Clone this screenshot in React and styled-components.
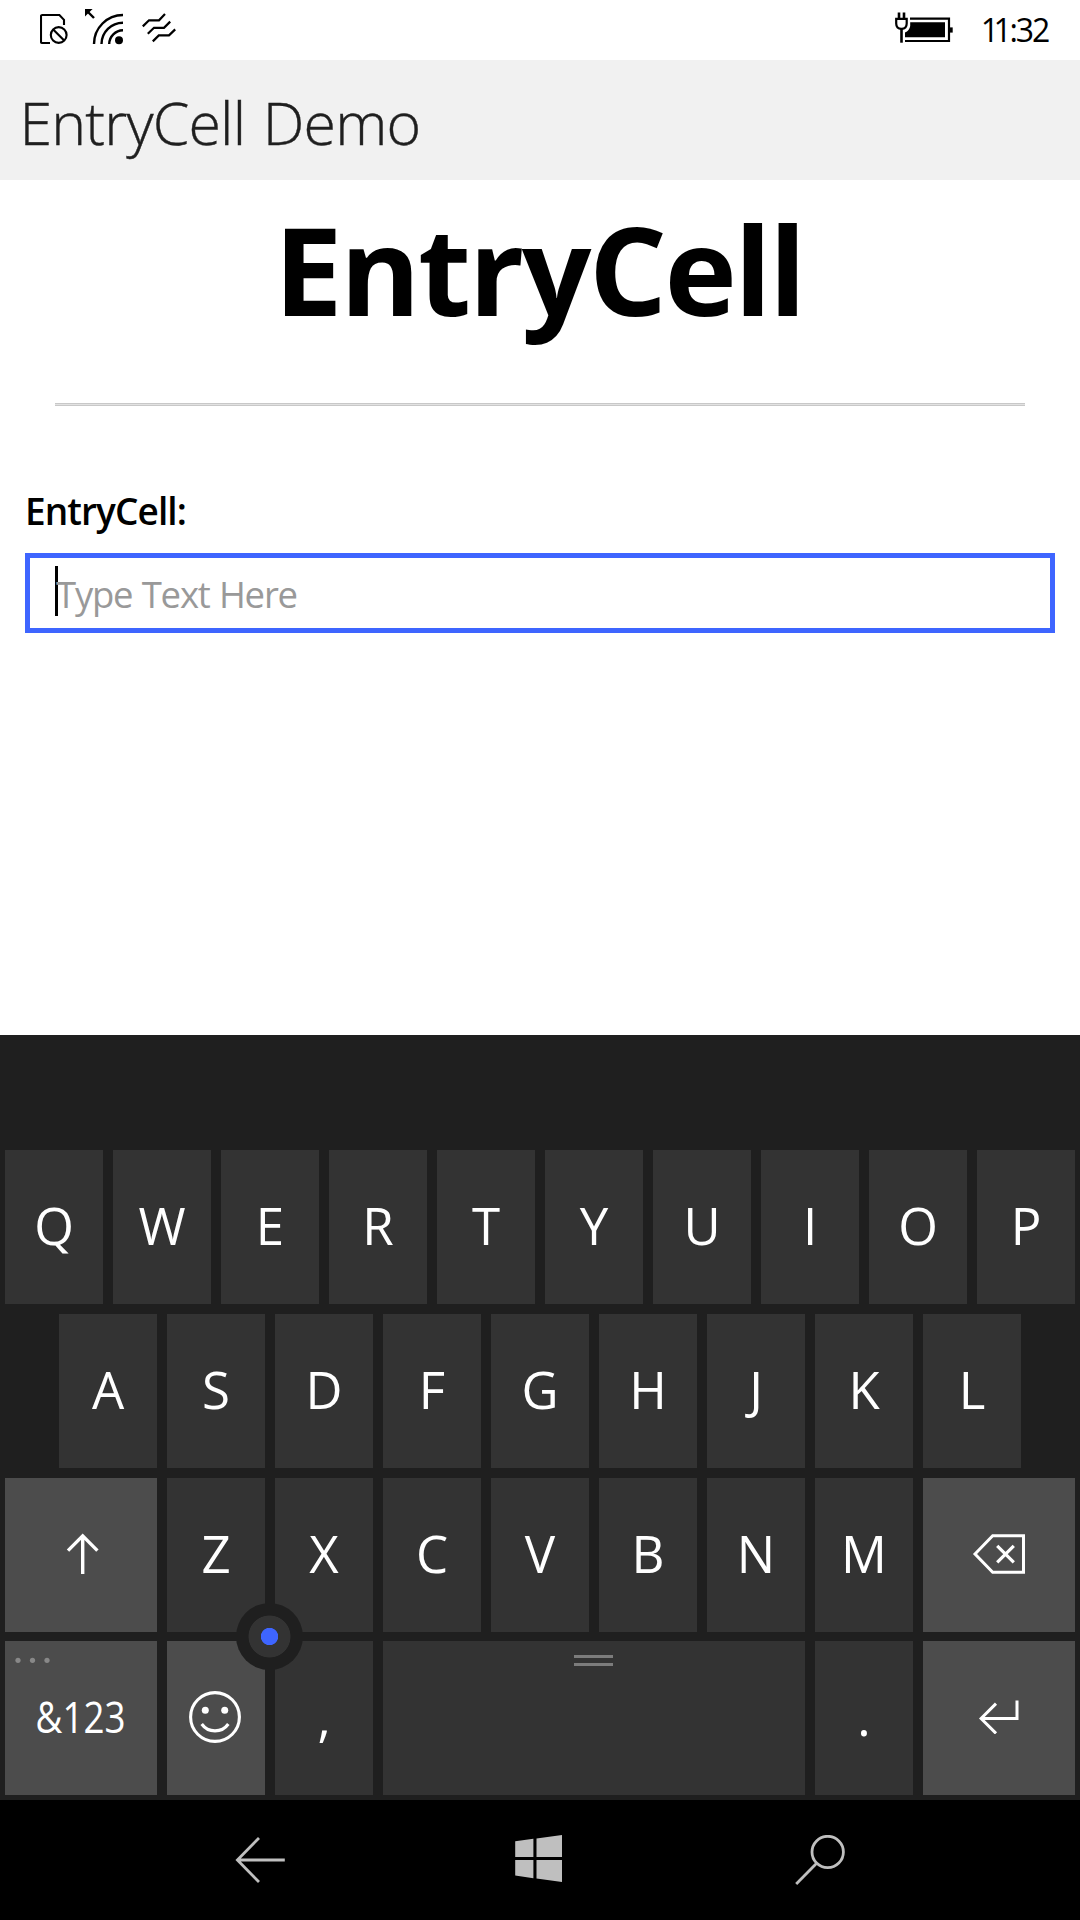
import React from 'react';
import styled, { createGlobalStyle } from 'styled-components';

const GlobalStyle = createGlobalStyle`
  * { box-sizing: border-box; }
  body { margin: 0; background: #fff; }
`;

const Phone = styled.div`
  width: 1080px;
  height: 1920px;
  display: flex;
  flex-direction: column;
  overflow: hidden;
  background: #fff;
  color: #000;
  font-family: 'Open Sans', 'Noto Sans', sans-serif;
  white-space: nowrap;
`;

const Glyph = styled.svg`
  display: block;
  flex: none;
  fill: none;
  stroke: currentColor;
`;

const StatusBar = styled.div`
  height: 60px;
  flex: none;
  display: flex;
  align-items: center;
  padding: 0 31px 0 40px;
`;

const StatusIcons = styled.div`
  display: flex;
  gap: 17px;
  flex: 1;
`;

const Clock = styled.span`
  display: flex;
  justify-content: flex-end;
  width: 69px;
  margin-left: 26px;
  padding-right: 1px;
  font-size: 32px;
  line-height: 44px;
  letter-spacing: -2.2px;
`;

const TightDigit = styled.span`
  letter-spacing: -5.5px;
`;

const TitleBar = styled.header`
  height: 120px;
  flex: none;
  display: flex;
  align-items: center;
  padding: 4px 19.5px 0;
  background: #f1f1f1;
  color: #1f1f1f;
  font-size: 59px;
  font-weight: 300;
  letter-spacing: -0.8px;
  word-spacing: 3px;
  -webkit-text-stroke: 0.4px #1f1f1f;
`;

const Content = styled.main`
  height: 855px;
  flex: none;
  display: flex;
  flex-direction: column;
`;

const Heading = styled.h1`
  margin: 0;
  padding-right: 2px;
  font-size: 122.5px;
  line-height: 178px;
  font-weight: 700;
  letter-spacing: -2.55px;
  text-align: center;
`;

const Rule = styled.div`
  height: 3px;
  margin: 45px 55px 85px;
  background: #e2e2e2;
  border: solid #c8c8c8;
  border-width: 1px 0;
`;

const Field = styled.div`
  display: flex;
  flex-direction: column;
  gap: 22px;
  padding: 0 25px;
`;

const Label = styled.label`
  font-size: 37px;
  line-height: 40px;
  font-weight: 600;
  letter-spacing: -0.92px;
`;

const TextBox = styled.div`
  height: 80px;
  display: flex;
  align-items: center;
  padding-left: 25px;
  border: 5px solid #3e65ff;
`;

const Caret = styled.span`
  width: 3px;
  height: 50px;
  margin-bottom: 4px;
  background: #000;
`;

const Placeholder = styled.span`
  margin-left: -2px;
  padding-top: 2px;
  color: #999;
  font-size: 36.5px;
  letter-spacing: -1.2px;
  word-spacing: 1px;
`;

const Keyboard = styled.section`
  height: 765px;
  flex: none;
  display: flex;
  flex-direction: column;
  gap: 10px;
  padding: 115px 5px 5px;
  background: #1f1f1f;
  color: #fff;
`;

const KeyRow = styled.div`
  position: relative;
  display: flex;
  justify-content: center;
  gap: 10px;
  height: 154px;
  margin-top: ${(p) => (p.$tight ? '-1px' : 0)};
`;

const Key = styled.div`
  position: relative;
  width: ${(p) => p.$w || 98}px;
  flex: none;
  display: flex;
  align-items: center;
  justify-content: center;
  padding-bottom: 4px;
  background: ${(p) => (p.$light ? '#4c4c4c' : '#333')};
  font-size: ${(p) => p.$size || 51}px;
`;

const Symbols = styled.span`
  transform: scaleX(0.855);
`;

const MoreDots = styled(Glyph)`
  position: absolute;
  left: 10px;
  top: 16px;
  fill: #888;
  stroke: none;
`;

const Grip = styled.div`
  position: absolute;
  top: 14px;
  left: 191px;
  width: 39px;
  height: 11px;
  border-top: 3px solid #7c7c7c;
  border-bottom: 3px solid #7c7c7c;
`;

const Nub = styled.div`
  position: absolute;
  left: 231px;
  top: -38px;
  width: 67px;
  height: 67px;
  border-radius: 50%;
  background: radial-gradient(circle, #3e65ff 8.3px, #333 9px, #333 20.6px, #1f1f1f 21.3px);
`;

const NavBar = styled.nav`
  height: 120px;
  flex: none;
  display: flex;
  justify-content: space-between;
  align-items: center;
  padding: 0 235px;
  background: #000;
  color: #bfbfbf;
`;

const SimIcon = () => (
  <Glyph width="28" height="60" viewBox="40 0 28 60" strokeWidth="2.1">
    <path d="M50 43H42.2Q41 43 41 41.8V16.2Q41 15 42.2 15H59.4L64 19.8V25" />
    <circle cx="58.7" cy="35" r="7.9" />
    <path d="M53.2 29.4L64.2 40.6" />
  </Glyph>
);

const WifiIcon = () => (
  <Glyph width="39" height="60" viewBox="85 0 39 60" strokeWidth="2.4">
    <path d="M94 44A29 29 0 0 1 123 15M101.5 44A21.5 21.5 0 0 1 123 22.7M109.2 44A14 14 0 0 1 123 30.2" />
    <circle cx="119" cy="40.3" r="4" fill="currentColor" stroke="none" />
    <path d="M85 9H92.6L85 16.6Z" fill="currentColor" stroke="none" />
    <path d="M86.5 10.5L94 18" />
  </Glyph>
);

const VibrateIcon = () => (
  <Glyph width="35" height="60" viewBox="141 0 35 60" strokeWidth="2.2">
    <path d="M142.8 26.4L149 20.3H159L165 14M147.8 33.8L154 27.8H164L170.2 21.6M152.8 41.4L158.8 35.4H169L175.2 29.4" />
  </Glyph>
);

const BatteryIcon = () => (
  <Glyph width="60" height="60" viewBox="894 0 60 60" strokeWidth="2.2">
    <path d="M899 12.5V18.5M904 12.5V18.5" strokeWidth="2.6" />
    <path d="M896.2 18.8H906.7V23.5Q906.7 28.8 901.5 28.8Q896.2 28.8 896.2 23.5Z" />
    <path d="M901.5 29V42.7" strokeWidth="2.6" />
    <path d="M910 18.6H949V41H905" />
    <path d="M910.2 22.2H945V37.2H905V32.4Q909.4 30.8 910.2 26Z" fill="currentColor" stroke="none" />
    <path d="M950 27.4H952.7V32.6H950Z" fill="currentColor" stroke="none" />
  </Glyph>
);

const ShiftIcon = () => (
  <Glyph width="38" height="42" viewBox="62 1532 38 42" strokeWidth="3.4">
    <path d="M82.7 1574V1536M68 1550.6L82.7 1535.9L97.4 1550.6" />
  </Glyph>
);

const BackspaceIcon = () => (
  <Glyph width="54" height="42" viewBox="972 1532 54 42" strokeWidth="3">
    <path d="M975 1554L992.7 1535.8H1023.5V1572.2H992.7Z" />
    <path d="M997.2 1545.8L1013.8 1562.4M1013.8 1545.8L997.2 1562.4" strokeWidth="3.2" />
  </Glyph>
);

const SmileIcon = () => (
  <Glyph width="54" height="54" viewBox="189 1689 54 54" strokeWidth="3.1">
    <circle cx="215" cy="1717" r="24.4" />
    <path d="M201.7 1724A16.3 16.3 0 0 0 228.3 1724" />
    <circle cx="205.3" cy="1710.3" r="3.5" fill="currentColor" stroke="none" />
    <circle cx="224.7" cy="1710.3" r="3.5" fill="currentColor" stroke="none" />
  </Glyph>
);

const EnterIcon = () => (
  <Glyph width="40" height="36" viewBox="979 1698 40 36" strokeWidth="3">
    <path d="M1017 1700.5V1718.5H981.5M996 1703.6L981.1 1718.5L996 1733.4" />
  </Glyph>
);

const BackIcon = () => (
  <Glyph width="50" height="50" viewBox="235 1835 50 50" strokeWidth="2.8">
    <path d="M284.8 1860H238M259 1838L237.4 1860L259 1882" />
  </Glyph>
);

const WindowsIcon = () => (
  <Glyph width="50" height="50" viewBox="515 1835 50 50">
    <path
      fill="currentColor"
      stroke="none"
      d="M515.2 1841.3L533.4 1838.8V1857H515.2ZM536.5 1838.4L562 1835V1857H536.5ZM515.2 1860H533.4V1878.2L515.2 1875.6ZM536.5 1860H562V1882L536.5 1878.6Z"
    />
  </Glyph>
);

const SearchIcon = () => (
  <Glyph width="50" height="50" viewBox="795 1835 50 50" strokeWidth="2.8">
    <circle cx="827.7" cy="1852" r="15.7" />
    <path d="M816.4 1863.5L796.2 1884" />
  </Glyph>
);

const letters = (s) => s.split('').map((c) => <Key key={c}>{c}</Key>);

export default function App() {
  return (
    <>
      <GlobalStyle />
      <Phone>
        <StatusBar>
          <StatusIcons>
            <SimIcon />
            <WifiIcon />
            <VibrateIcon />
          </StatusIcons>
          <BatteryIcon />
          <Clock>
            <TightDigit>1</TightDigit>1:32
          </Clock>
        </StatusBar>
        <TitleBar>EntryCell Demo</TitleBar>
        <Content>
          <Heading>EntryCell</Heading>
          <Rule />
          <Field>
            <Label>EntryCell:</Label>
            <TextBox>
              <Caret />
              <Placeholder>Type Text Here</Placeholder>
            </TextBox>
          </Field>
        </Content>
        <Keyboard>
          <KeyRow>{letters('QWERTYUIOP')}</KeyRow>
          <KeyRow>{letters('ASDFGHJKL')}</KeyRow>
          <KeyRow>
            <Key $w={152} $light><ShiftIcon /></Key>
            {letters('ZXCVBNM')}
            <Key $w={152} $light><BackspaceIcon /></Key>
          </KeyRow>
          <KeyRow $tight>
            <Key $w={152} $light $size={43}>
              <MoreDots width="40" height="8">
                <circle cx="3" cy="3.3" r="2.6" />
                <circle cx="17.5" cy="3.3" r="2.6" />
                <circle cx="32" cy="3.3" r="2.6" />
              </MoreDots>
              <Symbols>&amp;123</Symbols>
            </Key>
            <Key $light><SmileIcon /></Key>
            <Key>,</Key>
            <Key $w={422}><Grip /></Key>
            <Key>.</Key>
            <Key $w={152} $light><EnterIcon /></Key>
            <Nub />
          </KeyRow>
        </Keyboard>
        <NavBar>
          <BackIcon />
          <WindowsIcon />
          <SearchIcon />
        </NavBar>
      </Phone>
    </>
  );
}
